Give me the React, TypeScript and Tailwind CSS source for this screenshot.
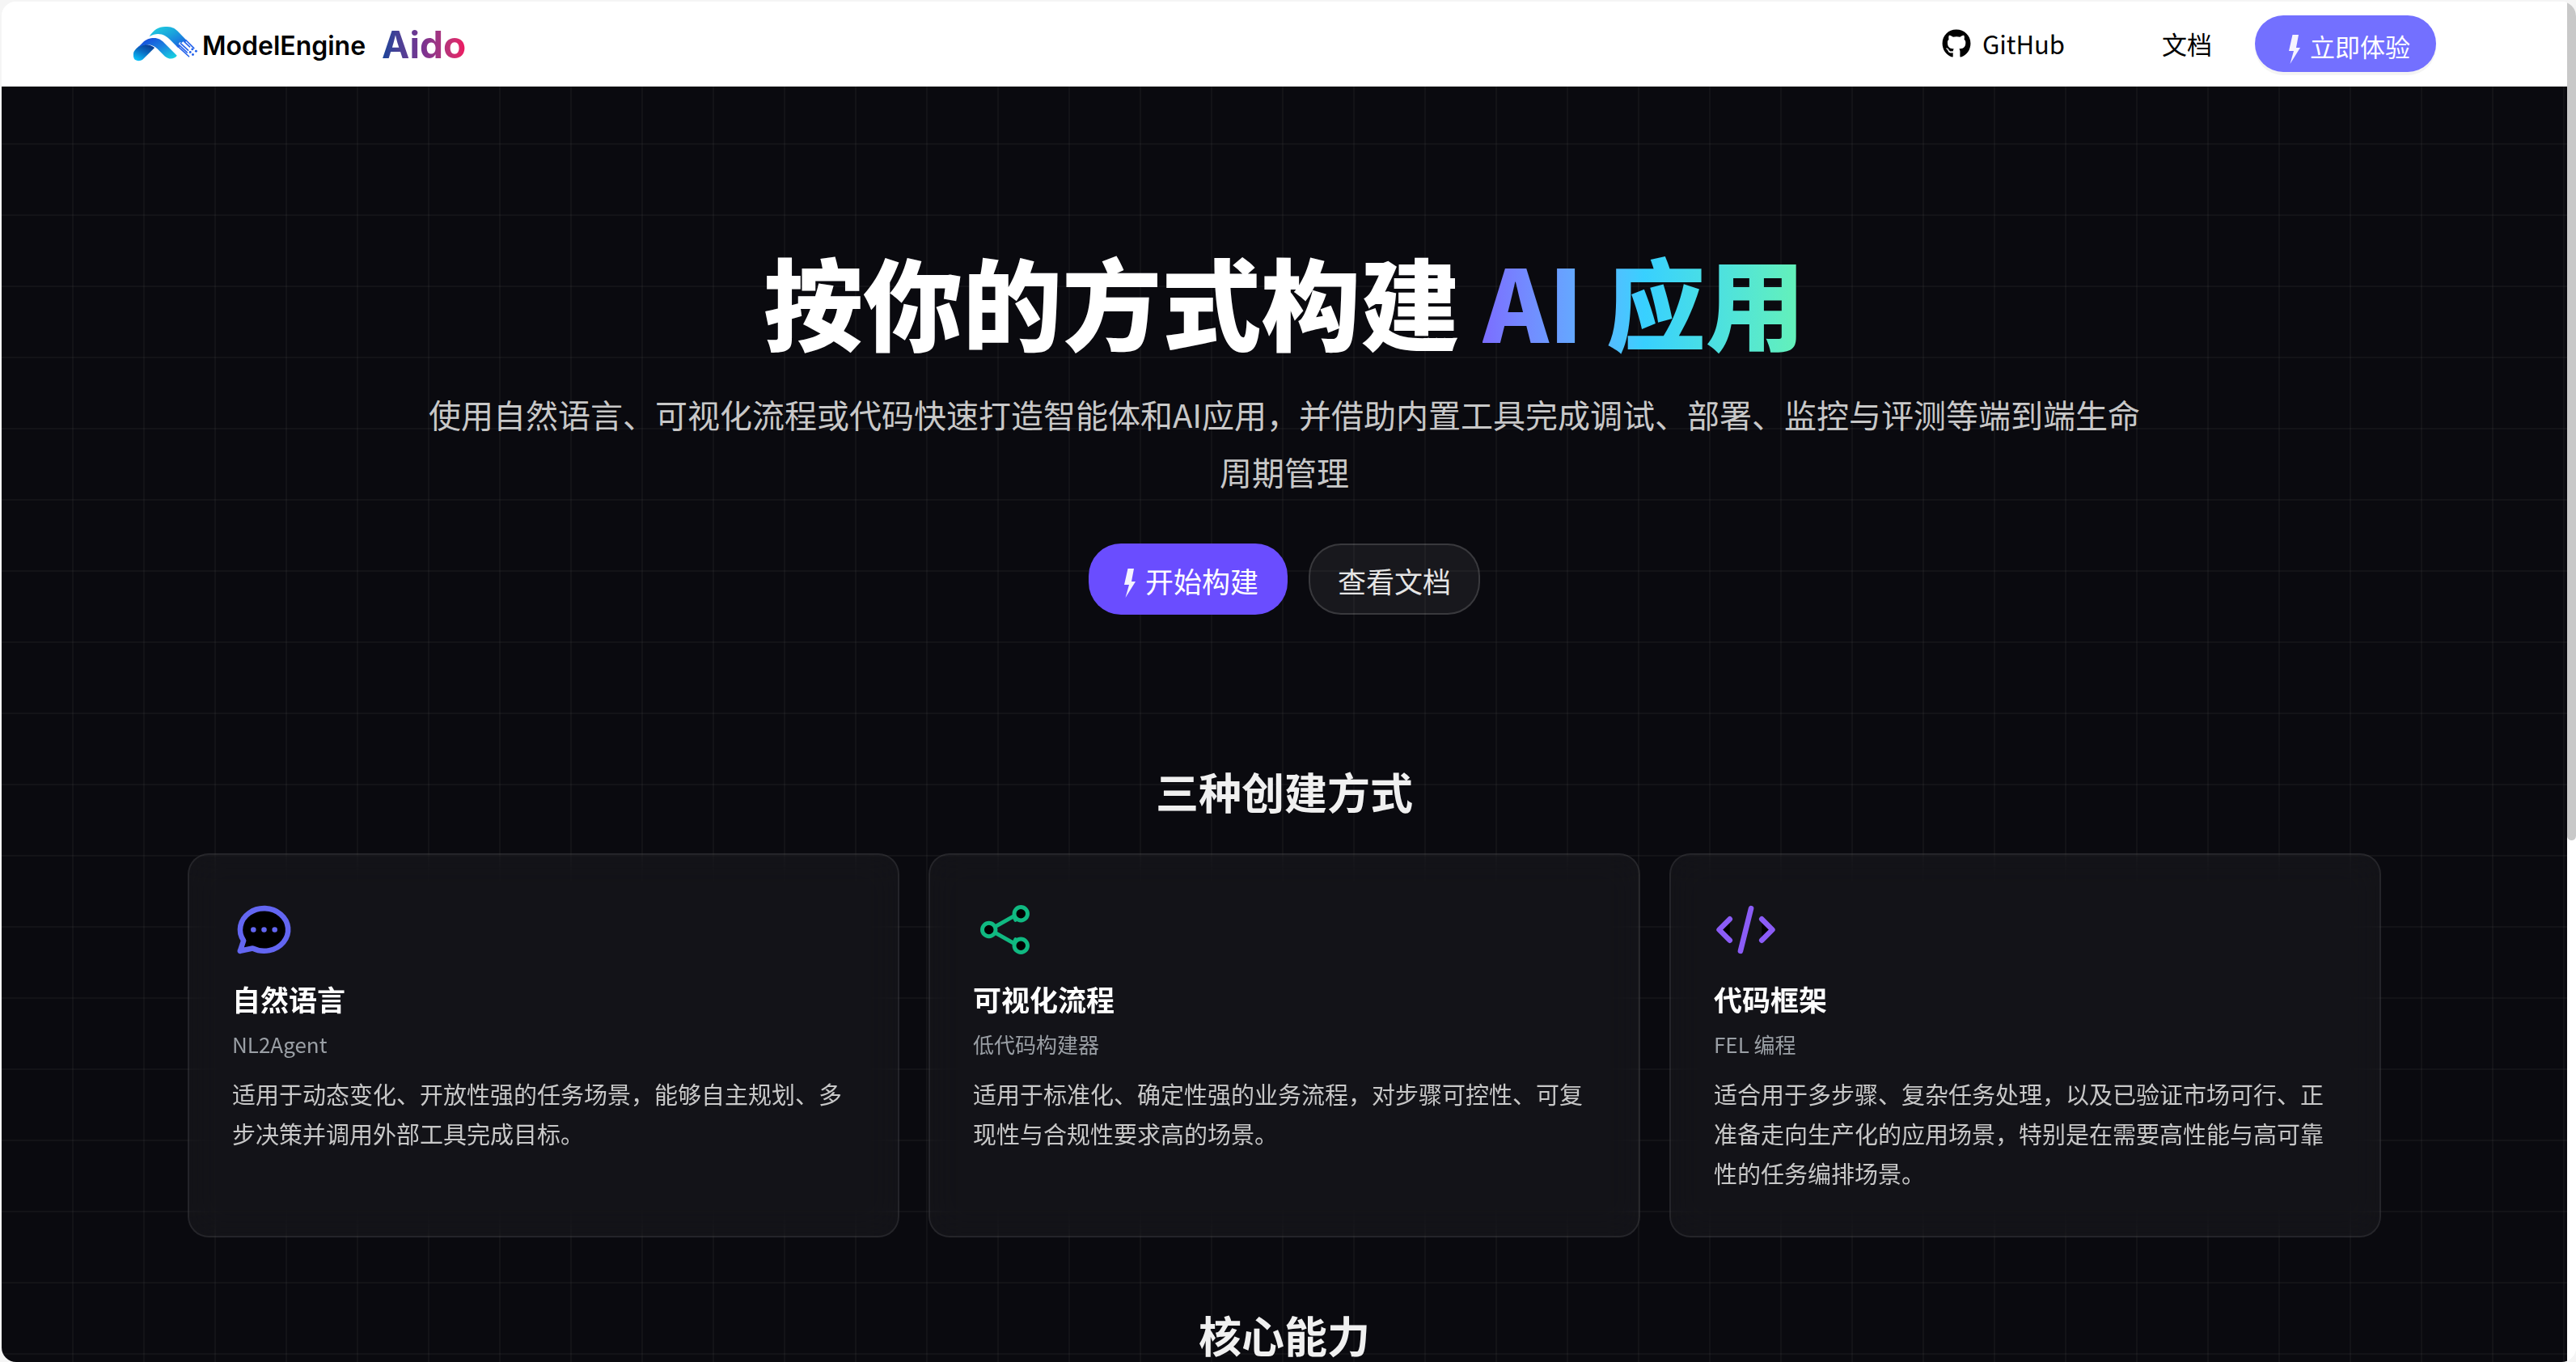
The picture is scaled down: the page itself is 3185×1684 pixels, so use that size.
import type { ReactNode } from 'react';
import { FaGithub } from 'react-icons/fa';

interface WayCardProps {
  icon: ReactNode;
  title: string;
  subtitle: string;
  description: string;
}

const BoltIcon = () => (
  <svg viewBox="0 0 14 36" className="mt-2 h-9 w-3.5" fill="#f5f3ff" aria-hidden="true">
    <path d="M4.5 0H12L9 16h5L1.5 36L6 20H0z" />
  </svg>
);

const ModelEngineMark = () => (
  <svg viewBox="0 0 242 134" className="h-11 w-20" aria-hidden="true">
    <defs>
      <linearGradient id="me-top" x1="0" y1="0" x2="1" y2="1">
        <stop offset="0" stopColor="#1fd3e0" />
        <stop offset="0.45" stopColor="#1aa5dc" />
        <stop offset="1" stopColor="#1a56e0" />
      </linearGradient>
      <linearGradient id="me-arch" x1="0" y1="0" x2="1" y2="1">
        <stop offset="0.1" stopColor="#1649dc" />
        <stop offset="0.5" stopColor="#1a7fe0" />
        <stop offset="1" stopColor="#18dbe0" />
      </linearGradient>
      <linearGradient id="me-leg" x1="0.8" y1="0" x2="0.2" y2="1">
        <stop offset="0" stopColor="#08358c" />
        <stop offset="0.5" stopColor="#0a6fc4" />
        <stop offset="1" stopColor="#0cc3fa" />
      </linearGradient>
    </defs>
    <path
      d="M62 40C78 16 96 3 122 3C144 3 156 7 168 19L204 56L196 62L190 58L184 64L176 62L172 70L178 78L170 82L142 54C124 34 96 20 62 40Z"
      fill="url(#me-top)"
    />
    <g stroke="#2563eb" strokeWidth="5" strokeLinecap="round" fill="none">
      <path d="M168 76L211 115" />
      <path d="M180 66L208 92" />
      <path d="M192 58L214 79" />
      <path d="M200 54L230 84" />
      <path d="M174 72L204 100" />
    </g>
    <g fill="#2563eb">
      <circle cx="216" cy="99" r="4.5" />
      <circle cx="224" cy="88" r="4.5" />
      <circle cx="226" cy="108" r="4.5" />
      <circle cx="238" cy="95" r="4.5" />
    </g>
    <path
      d="M2 108C2 96 10 88 22 78C42 64 64 70 82 82L42 122C32 134 14 134 6 126C3 121 2 115 2 108Z"
      fill="url(#me-leg)"
    />
    <path
      d="M14 86L34 66C50 50 64 46 80 46C96 46 107 53 118 64L166 112C156 127 134 127 120 114L92 86C70 66 42 66 14 86Z"
      fill="url(#me-arch)"
    />
  </svg>
);

const ChatIcon = () => (
  <svg
    viewBox="0 0 24 24"
    className="size-[79px]"
    fill="#000"
    stroke="#6366f1"
    strokeWidth="2"
    strokeLinecap="round"
    strokeLinejoin="round"
    aria-hidden="true"
  >
    <path d="M3 20l1.3 -3.9c-2.324 -3.437 -1.426 -7.872 2.1 -10.374c3.526 -2.501 8.59 -2.296 11.845 .48c3.255 2.777 3.695 7.266 1.029 10.501c-2.666 3.235 -7.615 4.215 -11.574 2.293l-4.7 1" />
    <path d="M8 12v.01M12 12v.01M16 12v.01" />
  </svg>
);

const ShareIcon = () => (
  <svg
    viewBox="0 0 24 24"
    className="size-[79px]"
    fill="#000"
    stroke="#10b981"
    strokeWidth="1.5"
    strokeLinecap="round"
    strokeLinejoin="round"
    aria-hidden="true"
  >
    <path d="M8.4 10.8L15.4 6.9L16 8.3M8.4 13.2L15.4 17.1L16 15.7" fill="none" />
    <circle cx="6" cy="12" r="2.5" />
    <circle cx="18" cy="6" r="2.5" />
    <circle cx="18" cy="18" r="2.5" />
  </svg>
);

const CodeIcon = () => (
  <svg
    viewBox="0 0 24 24"
    className="size-[79px]"
    fill="#000"
    stroke="#8b5cf6"
    strokeWidth="2"
    strokeLinecap="round"
    strokeLinejoin="round"
    aria-hidden="true"
  >
    <path d="M6 8l-4 4l4 4" />
    <path d="M18 8l4 4l-4 4" />
    <path d="M14 4l-4 16" />
  </svg>
);

const ways: WayCardProps[] = [
  {
    icon: <ChatIcon />,
    title: '自然语言',
    subtitle: 'NL2Agent',
    description:
      '适用于动态变化、开放性强的任务场景，能够自主规划、多步决策并调用外部工具完成目标。',
  },
  {
    icon: <ShareIcon />,
    title: '可视化流程',
    subtitle: '低代码构建器',
    description:
      '适用于标准化、确定性强的业务流程，对步骤可控性、可复现性与合规性要求高的场景。',
  },
  {
    icon: <CodeIcon />,
    title: '代码框架',
    subtitle: 'FEL 编程',
    description:
      '适合用于多步骤、复杂任务处理，以及已验证市场可行、正准备走向生产化的应用场景，特别是在需要高性能与高可靠性的任务编排场景。',
  },
];

const WayCard = ({ icon, title, subtitle, description }: WayCardProps) => (
  <article className="rounded-[26px] border-2 border-white/8 bg-white/4 p-[53px] backdrop-blur-[22px]">
    {icon}
    <h3 className="mt-5 text-[35px] leading-[51px] font-bold text-white">{title}</h3>
    <p className="mt-3 text-[26px] leading-[38px] text-[#9a9fa5]">{subtitle}</p>
    <p className="mt-[18px] text-[29px] leading-[49px] text-[#c8c8c8]">{description}</p>
  </article>
);

const Header = () => (
  <header className="bg-white">
    <div className="mx-auto flex h-[105px] w-full max-w-[2848px] items-center justify-between pb-0.5">
      <a href="#" className="flex items-center">
        <ModelEngineMark />
        <span className="ml-1.5 pt-1.5 font-['Inter'] text-[32px] leading-11 font-semibold text-black">
          ModelEngine
        </span>
        <span className="ml-5 bg-linear-to-r from-[#0f4499] via-[#7b3290] to-[#f0145f] bg-clip-text pt-0.5 font-['Inter'] text-[46px] leading-14 font-bold text-transparent">
          Aido
        </span>
      </a>
      <nav className="flex items-center text-[31px] leading-[45px] text-black">
        <a href="#" className="flex items-center gap-3.5">
          <FaGithub className="size-9" />
          GitHub
        </a>
        <a href="#" className="ml-[120px]">
          文档
        </a>
        <button
          type="button"
          className="ml-[53px] flex h-[70px] items-center gap-3 rounded-[35px] bg-[#7370ff] pt-1.5 pr-8 pl-[42px] text-white shadow-[0_4px_0_#f4f4f4]"
        >
          <BoltIcon />
          立即体验
        </button>
      </nav>
    </div>
  </header>
);

const Hero = () => (
  <section className="flex flex-col items-center pt-[189px] text-center">
    <h1 className="text-[123px] leading-[148px] font-black text-white">
      按你的方式构建{' '}
      <span className="bg-linear-to-r from-[#7b6dff] via-[#38d0ff] to-[#66f2b5] bg-clip-text text-transparent">
        AI 应用
      </span>
    </h1>
    <p className="mt-[33px] max-w-[2130px] text-[40px] leading-[71px] text-[#c8c8c8]">
      使用自然语言、可视化流程或代码快速打造智能体和AI应用，并借助内置工具完成调试、部署、监控与评测等端到端生命周期管理
    </p>
    <div className="mt-[53px] flex gap-[26px] text-[35px] leading-[51px]">
      <button
        type="button"
        className="flex h-[88px] items-center gap-3 rounded-[40px] bg-[#6a4dff] pt-0.5 pr-9 pl-11 text-white"
      >
        <BoltIcon />
        开始构建
      </button>
      <button
        type="button"
        className="h-[88px] rounded-[40px] border-2 border-white/14 bg-white/6 px-[34px] pt-0.5 text-[#e5e5e5]"
      >
        查看文档
      </button>
    </div>
  </section>
);

const SectionTitle = ({ children }: { children: ReactNode }) => (
  <h2 className="text-center text-[53px] leading-[66px] font-bold text-[#f0f0f0]">{children}</h2>
);

const App = () => {
  return (
    <div className="h-screen overflow-hidden bg-[#f5f5f5] pt-0.5 pl-0.5 font-['Noto_Sans_CJK_SC',sans-serif]">
      <div className="flex h-full overflow-hidden rounded-[18px] bg-white">
        <div className="flex min-w-0 flex-1 flex-col">
          <Header />
          <main className="flex-1 bg-[#0a0a0f] bg-[linear-gradient(to_right,rgba(255,255,255,0.035)_2px,transparent_2px),linear-gradient(to_bottom,rgba(255,255,255,0.035)_2px,transparent_2px)] bg-size-[88px_88px] bg-position-[-1px_70px]">
            <Hero />
            <section className="mx-auto mt-[185px] max-w-[2712px]">
              <SectionTitle>三种创建方式</SectionTitle>
              <div className="mt-11 grid grid-cols-3 gap-9">
                {ways.map((way) => (
                  <WayCard key={way.title} {...way} />
                ))}
              </div>
            </section>
            <section className="mt-[87px]">
              <SectionTitle>核心能力</SectionTitle>
            </section>
          </main>
        </div>
        <div className="w-[11px] shrink-0 bg-white">
          <div className="h-[1037px] rounded-b-md bg-[#c9c9c9]" />
        </div>
      </div>
    </div>
  );
};

export default App;
